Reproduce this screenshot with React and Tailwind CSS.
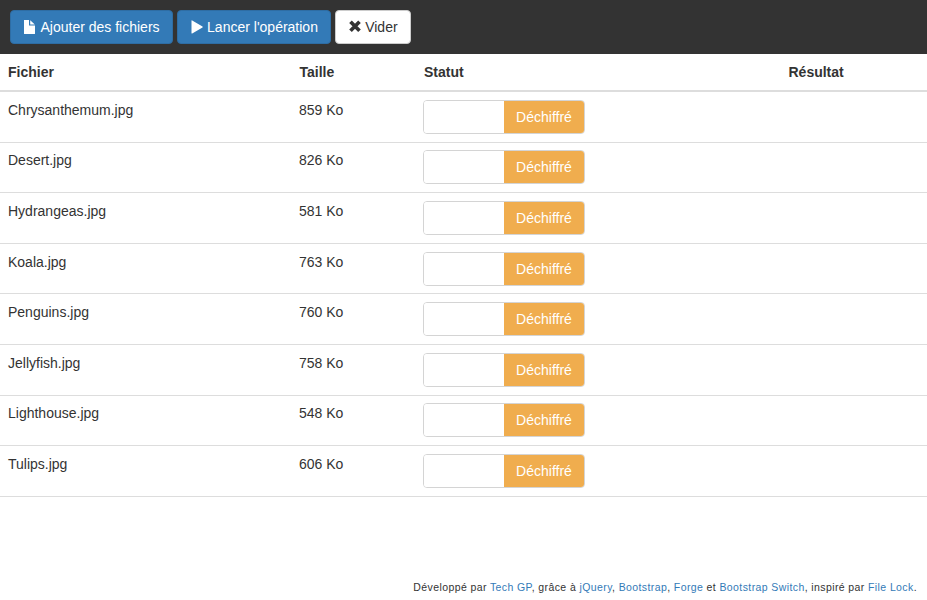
const files = [
  ["Chrysanthemum.jpg", "859 Ko"],
  ["Desert.jpg", "826 Ko"],
  ["Hydrangeas.jpg", "581 Ko"],
  ["Koala.jpg", "763 Ko"],
  ["Penguins.jpg", "760 Ko"],
  ["Jellyfish.jpg", "758 Ko"],
  ["Lighthouse.jpg", "548 Ko"],
  ["Tulips.jpg", "606 Ko"],
];

const COLS = "grid grid-cols-[291px_124px_365px_1fr]";

function FileIcon() {
  return (
    <svg className="mr-[4.500px] h-[14px] w-[14px]" viewBox="0 0 14 14" fill="currentColor">
      <path d="M2 0h5v5.500h6V13.400c0 .4-.2.600-.6.600H2.600C2.200 14 2 13.800 2 13.400zM8.200.2L12.800 4.600H8.200z" />
    </svg>
  );
}

function PlayIcon() {
  return (
    <svg className="mr-[3.500px] h-[14px] w-[14px]" viewBox="0 0 14 14" fill="currentColor">
      <path d="M1.500 .8c0-.5.3-.7.700-.4l10.300 6c.4.3.4.700 0 1l-10.300 6c-.4.3-.7.100-.7-.4z" />
    </svg>
  );
}

function RemoveIcon() {
  return (
    <svg className="mr-[3.500px] h-[14px] w-[14px]" viewBox="0 0 14 14" fill="none" stroke="currentColor" strokeWidth="3.700">
      <path d="M2.500 1.800l9 9M11.500 1.800l-9 9" />
    </svg>
  );
}

function Button({ className, children }) {
  return (
    <button className={`flex h-[34px] items-center rounded border whitespace-nowrap ${className}`}>
      {children}
    </button>
  );
}

function Link({ children }) {
  return <a className="text-[#337ab7]">{children}</a>;
}

export default function App() {
  return (
    <div className="flex h-[600px] w-[927px] flex-col overflow-hidden bg-white font-['Liberation_Sans',Arial,sans-serif] text-[14px] leading-5 text-[#333]">
      <header className="flex h-[54px] shrink-0 gap-[3.900px] bg-[#333] px-[10px] pt-[10px]">
        <Button className="w-[162.700px] border-[#2e6da4] bg-[#337ab7] pl-[11px] text-white"><FileIcon />Ajouter des fichiers</Button>
        <Button className="w-[154.200px] border-[#2e6da4] bg-[#337ab7] pl-[12px] text-white"><PlayIcon />Lancer l'opération</Button>
        <Button className="w-[76px] border-[#ccc] bg-white pl-[12px]"><RemoveIcon />Vider</Button>
      </header>
      <main>
        <div className={`${COLS} h-[38px] border-b-2 border-[#ddd] pt-2 font-bold`}>
          <div className="pl-2">Fichier</div>
          <div className="pl-[8.500px]">Taille</div>
          <div className="pl-[9px]">Statut</div>
          <div className="pl-[8.500px]">Résultat</div>
        </div>
        {files.map(([name, size]) => (
          <div key={name} className={`${COLS} h-[50.600px] border-b border-[#ddd] pt-[7.800px]`}>
            <div className="pl-2">{name}</div>
            <div className="pl-2">{size}</div>
            <div className="pl-2">
              <div className="flex h-[34px] w-[162px] overflow-hidden rounded border border-[#d4d4d4]">
                <div className="w-[80px] bg-white" />
                <div className="flex flex-1 items-center justify-center bg-[#f0ad4e] text-white">Déchiffré</div>
              </div>
            </div>
            <div />
          </div>
        ))}
      </main>
      <footer className="mt-auto pr-[10px] pb-[5px] text-right text-[10.500px] leading-4 tracking-[0.400px]">
        Développé par <Link>Tech GP</Link>, grâce à <Link>jQuery</Link>, <Link>Bootstrap</Link>, <Link>Forge</Link> et <Link>Bootstrap Switch</Link>, inspiré par <Link>File Lock</Link>.
      </footer>
    </div>
  );
}
